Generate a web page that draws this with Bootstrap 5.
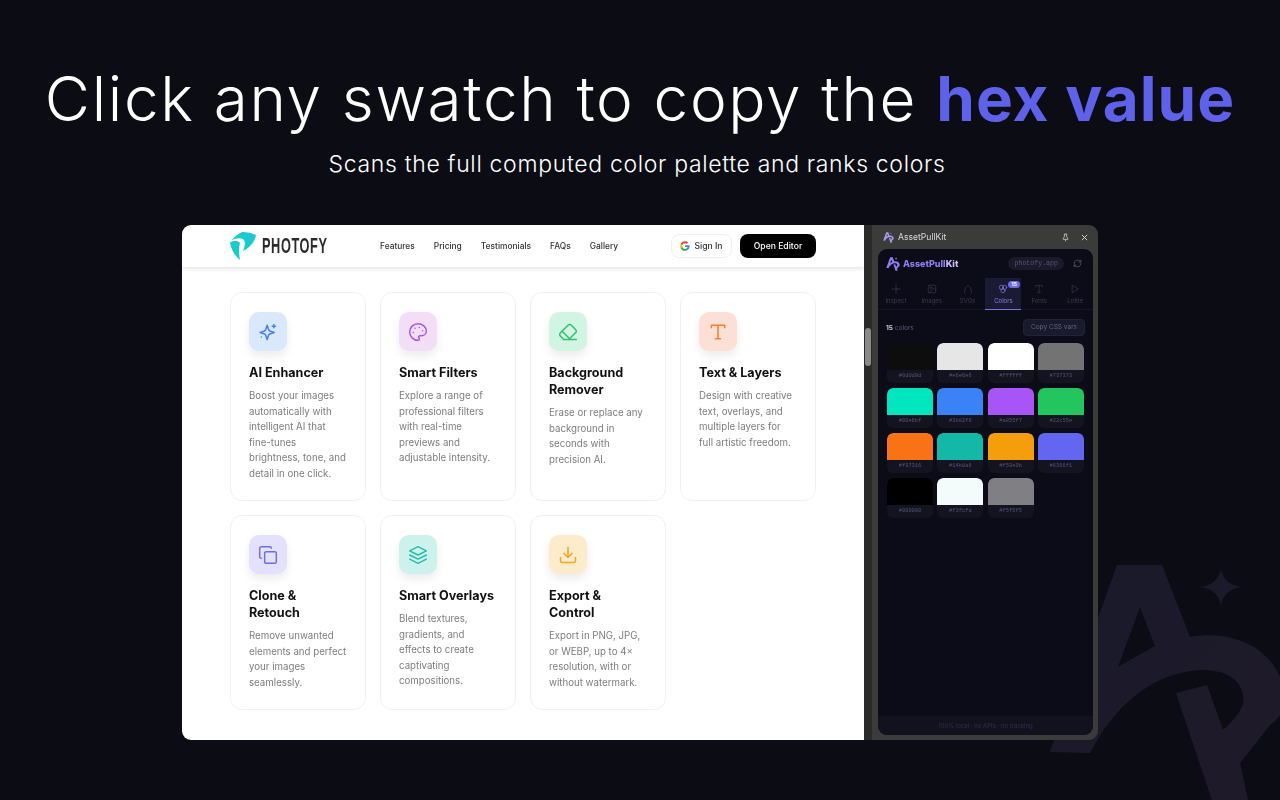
<!DOCTYPE html>
<html lang="en">
<head>
    <meta charset="UTF-8" />
    <meta name="viewport" content="width=device-width, initial-scale=1.0" />
    <title>AssetPullKit</title>
    <link href="https://cdn.jsdelivr.net/npm/bootstrap@5.3.6/dist/css/bootstrap.min.css" rel="stylesheet">
    <style>
        body { width: 1280px; height: 800px; overflow: hidden; background: #0b0c14; font-family: "Inter", "Liberation Sans", sans-serif; position: relative; }
        .bg-mark { position: absolute; left: 0; top: 0; width: 1280px; height: 800px; }
        .hero { position: relative; padding-top: 61px; height: 225px; color: #fff; }
        .hero-title { font-family: "Inter", sans-serif; font-weight: 350; font-size: 62px; line-height: 76px; letter-spacing: 1.65px; margin: 0; white-space: nowrap; }
        .hero-title b { font-weight: 700; color: #5e62e8; letter-spacing: 1px; }
        .hero-sub { font-size: 23px; line-height: 30px; margin: 12px 6px 0 0; font-weight: 350; letter-spacing: .67px; }
        .stage { position: relative; width: 916px; height: 515px; margin: 0 auto; filter: blur(.3px); }
        .site { width: 682px; background: #fff; border-radius: 9px 0 0 9px; overflow: hidden; }
        .site-head { height: 42px; padding: 0 48px 0 47px; box-shadow: 0 1px 5px rgba(0,0,0,.14); }
        .brand-word { display: inline-block; width: 113px; margin-left: 6px; margin-right: -48px; transform: scaleX(.58); transform-origin: left center; font-family: "Liberation Sans", sans-serif; font-weight: 700; font-size: 22px; letter-spacing: 1px; color: #2a2a2e; line-height: 1; }
        .site-nav { margin-left: 53px; gap: 19px; }
        .site-nav .nav-link { padding: 0; font-size: 8.4px; font-weight: 500; color: #333; }
        .btn-signin { height: 24px; width: 61px; padding: 0; font-size: 8.6px; font-weight: 500; color: #333; border: 1px solid #f0f0f2; border-radius: 8px; background: #fff; }
        .btn-editor { height: 24px; width: 76px; padding: 0; font-size: 8.6px; font-weight: 500; color: #fff; border-radius: 8px; background: #000; border: 0; }
        .tool-grid { display: grid; grid-template-columns: repeat(4, 136px); gap: 14px; padding: 25px 47px 0 48px; align-items: stretch; }
        .tool-card { border: 1px solid #f1f1f4; border-radius: 12px; padding: 19px 18px 19px 18px; background: #fff; }
        .tool-tile { width: 38px; height: 39px; border-radius: 10px; box-shadow: 0 5px 10px rgba(0,0,0,.08); }
        .tool-tile svg { width: 20px; height: 20px; fill: none; stroke-width: 1.8; stroke-linecap: round; stroke-linejoin: round; }
        .tool-name { font-family: "Inter", sans-serif; font-weight: 700; font-size: 12.6px; line-height: 17px; color: #111; margin: 13px 0 7px; }
        .tool-text { font-size: 9.7px; line-height: 15.5px; color: #7d7d7d; margin: 0; }
        .t-blue { background: #d9e9fb; } .t-blue svg { stroke: #4a80ea; }
        .t-purple { background: #f3def8; } .t-purple svg { stroke: #a658ea; }
        .t-green { background: #d2f4e2; } .t-green svg { stroke: #2fc46e; }
        .t-orange { background: #fde0d5; } .t-orange svg { stroke: #f57f2c; }
        .t-indigo { background: #e4e1fc; } .t-indigo svg { stroke: #6d6ee8; }
        .t-teal { background: #cdf2ee; } .t-teal svg { stroke: #25bda9; }
        .t-amber { background: #fdeccb; } .t-amber svg { stroke: #f3a51f; }
        .scroll-rail { width: 8px; background: #2a2a2b; }
        .scroll-thumb { width: 6px; height: 38px; margin: 103px 0 0 1px; background: #8a8a8a; border-radius: 3px; }
        .chrome { width: 226px; background: #3b3b3a; border-radius: 0 9px 9px 0; padding: 0 5px 5px 6px; }
        .chrome-bar { height: 24px; color: #d8d8dc; font-size: 8.6px; padding: 0 4px 0 5px; }
        .chrome-bar svg { display: block; }
        .close-x { margin-left: 10px; }
        .ext { flex: 1; background: #0b0c17; border-radius: 9px; overflow: hidden; min-height: 0; }
        .ext-head { height: 29px; padding: 0 11px 0 8px; }
        .ext-brand { font-family: "Inter", sans-serif; font-weight: 800; font-size: 9px; color: #8f7cf4; margin-left: 3px; }
        .ext-brand span { color: #cdbffb; }
        .ext-chip { font-family: "Liberation Mono", monospace; font-size: 6.6px; color: #56566f; background: #1a1a2c; border-radius: 7px; padding: 2px 6px; line-height: 9px; margin-right: 9px; }
        .ext-tabs { height: 32px; border-bottom: 1px solid #15162a; }
        .ext-tab { position: relative; flex: 1 1 0; font-size: 6px; color: #3b3b52; padding-top: 6px; }
        .ext-tab svg { width: 10px; height: 10px; fill: none; stroke: #3f3f57; stroke-width: 1.5; stroke-linecap: round; stroke-linejoin: round; display: block; margin: 0 auto 2px; }
        .ext-tab.on { background: #1a1a33; color: #8b83e8; border-bottom: 1px solid #7b74e0; height: 32px; }
        .ext-tab.on svg { stroke: #8b83e8; }
        .tab-count { position: absolute; left: 23px; top: 3px; font-size: 5px; line-height: 7px; padding: 0 3px; border-radius: 4px; background: #6d6ce8; color: #fff; font-weight: 700; }
        .ext-tools { padding: 9px 8px 0 8px; height: 33px; }
        .ext-count { font-size: 6.5px; color: #5e5e76; margin-top: 5px; }
        .ext-count b { color: #c9c9d4; }
        .btn-cssvars { height: 17px; width: 62px; padding: 0; font-size: 6.5px; color: #63637e; background: #191a2c; border: 1px solid #222338; border-radius: 4px; }
        .swatch-grid { display: grid; grid-template-columns: repeat(4, 46px); gap: 5px 4.3px; padding: 0 8px 0 9px; }
        .swatch-item { height: 40px; border-radius: 6px; overflow: hidden; background-color: #13141f; }
        .swatch-fill { height: 27px; border-radius: 6px 6px 0 0; }
        .swatch-hex { font-family: "Liberation Mono", monospace; font-size: 5.4px; line-height: 13px; text-align: center; color: #55557a; }
        .ext-foot { height: 19px; background: #11121e; font-size: 6px; color: #30304a; }
    </style>
</head>
<body>
    <svg class="bg-mark" viewBox="0 0 1280 800">
        <defs>
            <path id="apk-mark" fill-rule="evenodd" d="M1117 565L1162 565 1190 637C1235 629 1276 650 1284 690 1288 706 1282 716 1270 725L1240 763 1248 800 1212 800 1176 693 1207 685 1223 730C1238 716 1246 706 1243 694 1238 672 1212 668 1190 671 1150 677 1115 705 1090 753L1050 752 1117 565ZM1140 607L1118 667 1155 646 1140 607Z"/>
            <path id="apk-star" d="M1221 569C1223 579 1229 585 1241 587 1229 589 1223 595 1221 606 1219 595 1213 589 1201 587 1213 585 1219 579 1221 569Z"/>
            <linearGradient id="mark-fade" gradientUnits="userSpaceOnUse" x1="1050" y1="600" x2="1280" y2="780">
                <stop offset="0" stop-color="#1a1a2a"/>
                <stop offset="1" stop-color="#1f1a2a"/>
            </linearGradient>
            <linearGradient id="photofy-fade" x1="1" y1="0" x2="0" y2="1">
                <stop offset="0" stop-color="#1fc4e2"/>
                <stop offset="1" stop-color="#10d3b4"/>
            </linearGradient>
        </defs>
        <use href="#apk-mark" fill="url(#mark-fade)"/>
        <use href="#apk-star" fill="#1a1a2a"/>
    </svg>

    <header class="hero text-center">
        <h1 class="hero-title">Click any swatch to copy the <b>hex value</b></h1>
        <p class="hero-sub">Scans the full computed color palette and ranks colors</p>
    </header>

    <main class="stage d-flex">
        <section class="site">
            <div class="site-head d-flex align-items-center">
                <svg width="27" height="30" viewBox="0 0 27 30">
                    <path fill="url(#photofy-fade)" d="M13 1C18 1 23 2 27 4 26 10 22 16 14 20 16 15 17 10 14 8 11 6.500 6 7.500 2.500 9.500 5 6 9 3 13 1Z"/>
                    <path fill="url(#photofy-fade)" d="M1 11.500C5 9.500 9 9.500 11 12 9.500 17 10 23 11 29 5 24 2 18 1 11.500Z"/>
                </svg>
                <span class="brand-word">PHOTOFY</span>
                <nav class="nav site-nav">
                    <a class="nav-link" href="#">Features</a>
                    <a class="nav-link" href="#">Pricing</a>
                    <a class="nav-link" href="#">Testimonials</a>
                    <a class="nav-link" href="#">FAQs</a>
                    <a class="nav-link" href="#">Gallery</a>
                </nav>
                <div class="d-flex gap-2 ms-auto">
                    <button class="btn btn-signin d-flex align-items-center justify-content-center gap-1">
                        <svg width="10" height="10" viewBox="0 0 24 24">
                            <path fill="#4285F4" d="M23 12.3c0-.8-.1-1.6-.2-2.3H12v4.4h6.200c-.3 1.400-1.100 2.600-2.300 3.400v2.800h3.700c2.100-2 3.400-4.900 3.400-8.300z"/>
                            <path fill="#34A853" d="M12 23.500c3.100 0 5.700-1 7.600-2.800l-3.700-2.900c-1 .7-2.400 1.100-3.900 1.100-3 0-5.500-2-6.400-4.700H1.800v2.900c1.900 3.800 5.800 6.400 10.200 6.400z"/>
                            <path fill="#FBBC05" d="M5.600 14.200c-.5-1.400-.5-3 0-4.400V6.900H1.800c-1.600 3.200-1.600 7 0 10.200l3.800-2.900z"/>
                            <path fill="#EA4335" d="M12 5.100c1.700 0 3.200.6 4.400 1.700l3.300-3.300C17.700 1.600 15.100.5 12 .5 7.600.5 3.700 3.100 1.800 6.900l3.800 2.900c.9-2.700 3.400-4.700 6.400-4.700z"/>
                        </svg>
                        Sign In
                    </button>
                    <button class="btn btn-editor">Open Editor</button>
                </div>
            </div>

            <div class="tool-grid">
                <div class="tool-card">
                    <div class="tool-tile t-blue d-flex align-items-center justify-content-center">
                        <svg viewBox="0 0 24 24"><path d="M11 4l1.800 5.400a2 2 0 0 0 1.300 1.300L19.500 12.500l-5.400 1.800a2 2 0 0 0-1.300 1.300L11 21l-1.800-5.400a2 2 0 0 0-1.300-1.300L2.500 12.500l5.400-1.800a2 2 0 0 0 1.300-1.300z"/><path d="M19 3v4M17 5h4M4 18v.01"/></svg>
                    </div>
                    <h3 class="tool-name">AI Enhancer</h3>
                    <p class="tool-text">Boost your images automatically with intelligent AI that fine-tunes brightness, tone, and detail in one click.</p>
                </div>
                <div class="tool-card">
                    <div class="tool-tile t-purple d-flex align-items-center justify-content-center">
                        <svg viewBox="0 0 24 24"><path d="M12 2C6.500 2 2 6.500 2 12s4.500 10 10 10c.926 0 1.648-.746 1.648-1.688 0-.437-.18-.835-.437-1.125-.29-.289-.438-.652-.438-1.125a1.640 1.640 0 0 1 1.668-1.668h1.996c3.051 0 5.555-2.503 5.555-5.554C21.965 6.012 17.461 2 12 2z"/><path d="M13.500 6.500v.01M17.500 10.500v.01M8.500 7.500v.01M6.500 12.500v.01"/></svg>
                    </div>
                    <h3 class="tool-name">Smart Filters</h3>
                    <p class="tool-text">Explore a range of professional filters with real-time previews and adjustable intensity.</p>
                </div>
                <div class="tool-card">
                    <div class="tool-tile t-green d-flex align-items-center justify-content-center">
                        <svg viewBox="0 0 24 24"><path d="M7 21l-4.300-4.300c-1-1-1-2.500 0-3.400l9.600-9.600c1-1 2.500-1 3.400 0l5.600 5.600c1 1 1 2.500 0 3.400L13 21"/><path d="M22 21H7M5 11l9 9"/></svg>
                    </div>
                    <h3 class="tool-name">Background Remover</h3>
                    <p class="tool-text">Erase or replace any background in seconds with precision AI.</p>
                </div>
                <div class="tool-card">
                    <div class="tool-tile t-orange d-flex align-items-center justify-content-center">
                        <svg viewBox="0 0 24 24"><path d="M4 7V4h16v3M9 20h6M12 4v16"/></svg>
                    </div>
                    <h3 class="tool-name">Text &amp; Layers</h3>
                    <p class="tool-text">Design with creative text, overlays, and multiple layers for full artistic freedom.</p>
                </div>
                <div class="tool-card">
                    <div class="tool-tile t-indigo d-flex align-items-center justify-content-center">
                        <svg viewBox="0 0 24 24"><rect x="8" y="8" width="14" height="14" rx="2"/><path d="M4 16c-1.100 0-2-.9-2-2V4c0-1.100.9-2 2-2h10c1.100 0 2 .9 2 2"/></svg>
                    </div>
                    <h3 class="tool-name">Clone &amp;<br>Retouch</h3>
                    <p class="tool-text">Remove unwanted elements and perfect your images seamlessly.</p>
                </div>
                <div class="tool-card">
                    <div class="tool-tile t-teal d-flex align-items-center justify-content-center">
                        <svg viewBox="0 0 24 24"><path d="M12 2L2 7l10 5 10-5z"/><path d="M2 12l10 5 10-5M2 17l10 5 10-5"/></svg>
                    </div>
                    <h3 class="tool-name">Smart Overlays</h3>
                    <p class="tool-text">Blend textures, gradients, and effects to create captivating compositions.</p>
                </div>
                <div class="tool-card">
                    <div class="tool-tile t-amber d-flex align-items-center justify-content-center">
                        <svg viewBox="0 0 24 24"><path d="M21 15v4a2 2 0 0 1-2 2H5a2 2 0 0 1-2-2v-4M7 10l5 5 5-5M12 15V3"/></svg>
                    </div>
                    <h3 class="tool-name">Export &amp; Control</h3>
                    <p class="tool-text">Export in PNG, JPG, or WEBP, up to 4× resolution, with or without watermark.</p>
                </div>
            </div>
        </section>

        <div class="scroll-rail"><div class="scroll-thumb"></div></div>

        <aside class="chrome d-flex flex-column">
            <div class="chrome-bar d-flex align-items-center">
                <svg width="11" height="11" viewBox="1045 560 245 245"><use href="#apk-mark" fill="#a99cf0"/><use href="#apk-star" fill="#a99cf0"/></svg>
                <span class="ms-1">AssetPullKit</span>
                <svg class="ms-auto" width="9" height="9" viewBox="0 0 24 24" fill="none" stroke="#d8d8dc" stroke-width="2"><path d="M12 17v5M8 3h8M9 3v7l-3 4v3h12v-3l-3-4V3"/></svg>
                <svg class="close-x" width="9" height="9" viewBox="0 0 24 24" fill="none" stroke="#d8d8dc" stroke-width="2.500"><path d="M5 5l14 14M19 5L5 19"/></svg>
            </div>
            <div class="ext d-flex flex-column">
                <div class="ext-head d-flex align-items-center">
                    <svg width="14" height="14" viewBox="1045 560 245 245"><use href="#apk-mark" fill="#8f7cf4"/><use href="#apk-star" fill="#cdbffb"/></svg>
                    <span class="ext-brand">AssetPull<span>Kit</span></span>
                    <span class="ext-chip ms-auto">photofy.app</span>
                    <svg width="9" height="9" viewBox="0 0 24 24" fill="none" stroke="#5d5d74" stroke-width="2" stroke-linecap="round" stroke-linejoin="round"><path d="M3 12a9 9 0 0 1 15-6.700L21 8M21 3v5h-5M21 12a9 9 0 0 1-15 6.700L3 16M3 21v-5h5"/></svg>
                </div>
                <div class="ext-tabs d-flex text-center">
                    <div class="ext-tab"><svg viewBox="0 0 24 24"><path d="M12 2v6M12 16v6M2 12h6M16 12h6"/><circle cx="12" cy="12" r="2"/></svg>Inspect</div>
                    <div class="ext-tab"><svg viewBox="0 0 24 24"><rect x="3" y="3" width="18" height="18" rx="2"/><circle cx="9" cy="9" r="2"/><path d="M21 15l-5-5L5 21"/></svg>Images</div>
                    <div class="ext-tab"><svg viewBox="0 0 24 24"><path d="M4 21C4 10 8 4 12 4s8 6 8 17"/></svg>SVGs</div>
                    <div class="ext-tab on"><svg viewBox="0 0 24 24"><circle cx="8" cy="8" r="5"/><circle cx="16" cy="8" r="5"/><circle cx="12" cy="16" r="5"/></svg>Colors<span class="tab-count">15</span></div>
                    <div class="ext-tab"><svg viewBox="0 0 24 24"><path d="M4 7V4h16v3M9 20h6M12 4v16"/></svg>Fonts</div>
                    <div class="ext-tab"><svg viewBox="0 0 24 24"><path d="M6 3l14 9-14 9z"/></svg>Lottie</div>
                </div>
                <div class="ext-tools d-flex justify-content-between align-items-start">
                    <span class="ext-count"><b>15</b> colors</span>
                    <button class="btn btn-cssvars">Copy CSS vars</button>
                </div>
                <div class="swatch-grid">
                    <div class="swatch-item"><div class="swatch-fill" style="background:#0d0d0d"></div><div class="swatch-hex">#0d0d0d</div></div>
                    <div class="swatch-item"><div class="swatch-fill" style="background:#e6e6e6"></div><div class="swatch-hex">#e6e6e6</div></div>
                    <div class="swatch-item"><div class="swatch-fill" style="background:#ffffff"></div><div class="swatch-hex">#ffffff</div></div>
                    <div class="swatch-item"><div class="swatch-fill" style="background:#737373"></div><div class="swatch-hex">#737373</div></div>
                    <div class="swatch-item"><div class="swatch-fill" style="background:#00e6bf"></div><div class="swatch-hex">#00e6bf</div></div>
                    <div class="swatch-item"><div class="swatch-fill" style="background:#3b82f6"></div><div class="swatch-hex">#3b82f6</div></div>
                    <div class="swatch-item"><div class="swatch-fill" style="background:#a855f7"></div><div class="swatch-hex">#a855f7</div></div>
                    <div class="swatch-item"><div class="swatch-fill" style="background:#22c55e"></div><div class="swatch-hex">#22c55e</div></div>
                    <div class="swatch-item"><div class="swatch-fill" style="background:#f97316"></div><div class="swatch-hex">#f97316</div></div>
                    <div class="swatch-item"><div class="swatch-fill" style="background:#14b8a6"></div><div class="swatch-hex">#14b8a6</div></div>
                    <div class="swatch-item"><div class="swatch-fill" style="background:#f59e0b"></div><div class="swatch-hex">#f59e0b</div></div>
                    <div class="swatch-item"><div class="swatch-fill" style="background:#6366f1"></div><div class="swatch-hex">#6366f1</div></div>
                    <div class="swatch-item"><div class="swatch-fill" style="background:#000000"></div><div class="swatch-hex">#000000</div></div>
                    <div class="swatch-item"><div class="swatch-fill" style="background:#f3fcfa"></div><div class="swatch-hex">#f3fcfa</div></div>
                    <div class="swatch-item"><div class="swatch-fill" style="background:#7f7f84"></div><div class="swatch-hex">#f5f5f5</div></div>
                </div>
                <div class="ext-foot d-flex align-items-center justify-content-center mt-auto">100% local · no APIs · no tracking</div>
            </div>
        </aside>
    </main>
    <script src="https://cdn.jsdelivr.net/npm/bootstrap@5.3.6/dist/js/bootstrap.bundle.min.js"></script>
</body>
</html>
